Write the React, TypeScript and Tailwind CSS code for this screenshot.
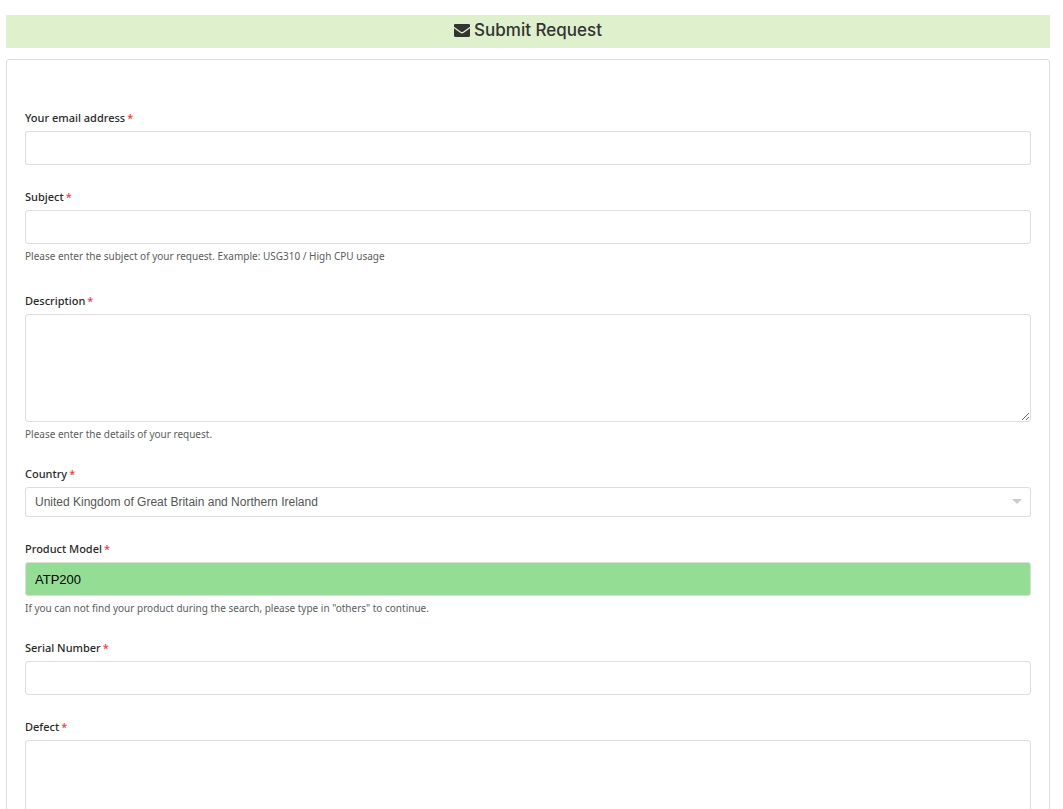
import { useState } from "react";

interface FieldProps {
  id: string;
  label: string;
  hint?: string;
  className?: string;
  children: React.ReactNode;
}

const inputStyle =
  "block w-full rounded-[3px] border border-[#dddddd] px-[9px] text-[13px] text-black font-['Liberation_Sans',Arial,sans-serif] focus:outline-none focus:border-blue-400";

const EnvelopeIcon = () => (
  <svg viewBox="0 0 16 13" className="h-[13px] w-4" aria-hidden="true">
    <path
      fill="#333333"
      d="M1.2 0h13.6C15.5 0 16 .5 16 1.2v1.5L9 7.7c-.6.5-1.4.5-2 0L0 2.700V1.200C0 .5.5 0 1.200 0z"
    />
    <path
      fill="#333333"
      d="M0 4.300l6.200 4.500c1.100.8 2.500.8 3.600 0L16 4.300v7.500c0 .7-.5 1.200-1.200 1.200H1.200C.5 13 0 12.500 0 11.800z"
    />
  </svg>
);

const Field = ({ id, label, hint, className, children }: FieldProps) => {
  return (
    <div className={className}>
      <label
        htmlFor={id}
        className="mb-1 block text-[11px] leading-[18px] font-medium text-[#2a2a2a]"
      >
        {label}
        <span className="ml-0.5 text-[#ff3340]">*</span>
      </label>
      {children}
      {hint && (
        <p className="mt-1 text-[10px] leading-4 text-[#5c5c5c]">{hint}</p>
      )}
    </div>
  );
};

const App = () => {
  const [formData, setFormData] = useState({
    email: "",
    subject: "",
    description: "",
    country: "United Kingdom of Great Britain and Northern Ireland",
    model: "ATP200",
    serial: "",
    defect: "",
  });

  const handleChange = (
    event: React.ChangeEvent<
      HTMLInputElement | HTMLTextAreaElement | HTMLSelectElement
    >
  ) => {
    const { name, value } = event.target;
    setFormData({ ...formData, [name]: value });
  };

  return (
    <main className="min-h-screen bg-white pt-[15px] pr-[13px] pb-4 pl-1.5 font-['Noto_Sans','Open_Sans',sans-serif]">
      <h1 className="flex h-[33px] items-center justify-center gap-1 bg-[#dff1cc] pb-0.5 text-[17px] font-medium text-[#333333] font-['Inter',sans-serif]">
        <EnvelopeIcon />
        Submit Request
      </h1>
      <form className="mt-[11px] flex flex-col gap-[23px] rounded-[3px] border border-[#dddddd] px-[18px] pt-[49px] pb-6">
        <Field id="email" label="Your email address">
          <input
            type="email"
            id="email"
            name="email"
            value={formData.email}
            onChange={handleChange}
            className={`${inputStyle} h-[34px]`}
          />
        </Field>
        <Field
          id="subject"
          label="Subject"
          hint="Please enter the subject of your request. Example: USG310 / High CPU usage"
          className="pb-[5px]"
        >
          <input
            type="text"
            id="subject"
            name="subject"
            value={formData.subject}
            onChange={handleChange}
            className={`${inputStyle} h-[34px]`}
          />
        </Field>
        <Field
          id="description"
          label="Description"
          hint="Please enter the details of your request."
        >
          <textarea
            id="description"
            name="description"
            value={formData.description}
            onChange={handleChange}
            className={`${inputStyle} h-[108px] resize-y py-2`}
          />
        </Field>
        <Field id="country" label="Country">
          <div className="relative">
            <select
              id="country"
              name="country"
              value={formData.country}
              onChange={handleChange}
              className="block h-[30px] w-full appearance-none rounded-[3px] border border-[#dddddd] bg-white px-[9px] text-[12px] text-[#555555] font-['Liberation_Sans',Arial,sans-serif] focus:outline-none focus:border-blue-400"
            >
              <option>United Kingdom of Great Britain and Northern Ireland</option>
            </select>
            <svg
              viewBox="0 0 10 5"
              className="pointer-events-none absolute top-3 right-[9px] h-[5px] w-[10px] fill-[#cccccc]"
            >
              <path d="M0 0h10L5 5z" />
            </svg>
          </div>
        </Field>
        <Field
          id="model"
          label="Product Model"
          hint={'If you can not find your product during the search, please type in "others" to continue.'}
        >
          <input
            type="text"
            id="model"
            name="model"
            value={formData.model}
            onChange={handleChange}
            className={`${inputStyle} h-[34px] bg-[#94dd94]`}
          />
        </Field>
        <Field id="serial" label="Serial Number">
          <input
            type="text"
            id="serial"
            name="serial"
            value={formData.serial}
            onChange={handleChange}
            className={`${inputStyle} h-[34px]`}
          />
        </Field>
        <Field id="defect" label="Defect">
          <textarea
            id="defect"
            name="defect"
            value={formData.defect}
            onChange={handleChange}
            className={`${inputStyle} h-[108px] resize-y py-2`}
          />
        </Field>
      </form>
    </main>
  );
};

export default App;
